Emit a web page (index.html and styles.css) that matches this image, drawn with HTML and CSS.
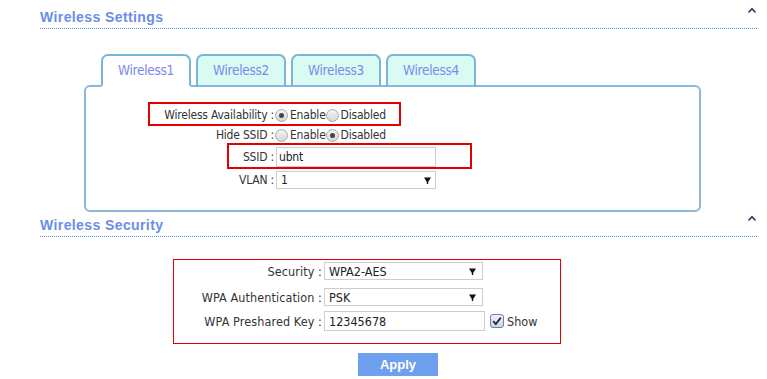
FILE: index.html
```html
<!DOCTYPE html>
<html>
<head>
<meta charset="utf-8">
<link rel="stylesheet" href="styles.css">
</head>
<body>
<div class="sec-head">
  <h2>Wireless Settings</h2>
  <svg class="caret" width="10" height="6" viewBox="0 0 10 6"><path d="M0.5 5.5 L5 0.5 L9.5 5.5 L7.3 5.5 L5 3 L2.7 5.5 Z" fill="#2b3f73"/></svg>
</div>

<div class="tabs-area">
  <div class="tabs">
    <div class="tab active">Wireless1</div>
    <div class="tab">Wireless2</div>
    <div class="tab">Wireless3</div>
    <div class="tab">Wireless4</div>
  </div>
  <div class="panel">
    <div class="prow">
      <span class="plabel">Wireless Availability :</span>
      <span class="ctl"><span class="radio on"></span>Enable<span class="radio"></span>Disabled</span>
    </div>
    <div class="prow">
      <span class="plabel">Hide SSID :</span>
      <span class="ctl"><span class="radio"></span>Enable<span class="radio on"></span>Disabled</span>
    </div>
    <div class="prow r3">
      <span class="plabel">SSID :</span>
      <span class="ctl"><span class="input ssid">ubnt</span></span>
    </div>
    <div class="prow r4">
      <span class="plabel">VLAN :</span>
      <span class="ctl"><span class="select vlan">1<svg class="arrow" width="7" height="7" viewBox="0 0 7 7"><path d="M0 0.5 H7 L4.2 5 V7 H2.8 V5 Z" fill="#111"/></svg></span></span>
    </div>
    <div class="mark m1"></div>
    <div class="mark m2"></div>
  </div>
</div>

<div class="sec-head s2">
  <h2>Wireless Security</h2>
  <svg class="caret" width="10" height="6" viewBox="0 0 10 6"><path d="M0.5 5.5 L5 0.5 L9.5 5.5 L7.3 5.5 L5 3 L2.7 5.5 Z" fill="#2b3f73"/></svg>
</div>

<div class="sec-body">
  <div class="srow">
    <span class="slabel">Security :</span>
    <span class="select sel">WPA2-AES<svg class="arrow" width="7" height="7" viewBox="0 0 7 7"><path d="M0 0.5 H7 L4.2 5 V7 H2.8 V5 Z" fill="#111"/></svg></span>
  </div>
  <div class="srow s-r2">
    <span class="slabel">WPA Authentication :</span>
    <span class="select sel">PSK<svg class="arrow" width="7" height="7" viewBox="0 0 7 7"><path d="M0 0.5 H7 L4.2 5 V7 H2.8 V5 Z" fill="#111"/></svg></span>
  </div>
  <div class="srow s-r3">
    <span class="slabel">WPA Preshared Key :</span>
    <span class="ctl"><span class="input key">12345678</span>
      <svg class="check" width="14" height="14" viewBox="0 0 14 14">
        <defs><linearGradient id="cg" x1="0" y1="0" x2="0" y2="1"><stop offset="0" stop-color="#eef3fa"/><stop offset="1" stop-color="#c9d5e6"/></linearGradient></defs>
        <rect x="0.5" y="0.5" width="13" height="13" rx="2.5" fill="url(#cg)" stroke="#6f7fa3"/>
        <path d="M3.2 7.2 L5.8 10 L10.8 3.6" fill="none" stroke="#2a2a2a" stroke-width="1.8"/>
      </svg><span class="show">Show</span></span>
  </div>
  <div class="mark m3"></div>
</div>

<button class="apply">Apply</button>
</body>
</html>
```
FILE: styles.css
```css
body {
  margin: 0;
  font-family: "DejaVu Sans Condensed", "DejaVu Sans", sans-serif;
  font-size: 12px;
  color: #333;
  background: #fff;
}

.sec-head {
  display: flex;
  justify-content: space-between;
  align-items: flex-start;
  margin: 0 10px 0 40px;
  padding: 9px 0 3px;
  border-bottom: 1px dotted #4b8fe6;
}

.sec-head h2 {
  margin: 0;
  font-family: "Liberation Sans", Arial, sans-serif;
  font-size: 14px;
  line-height: 16px;
  font-weight: bold;
  color: #6b8de9;
  letter-spacing: 0.4px;
}

.caret {
  display: block;
  margin-top: -2px;
}

.s2 {
  padding-top: 5px;
}

.tabs-area {
  margin: 25px 0 0 84px;
  width: 617px;
}

.tabs {
  display: flex;
  gap: 5px;
  padding-left: 17px;
  position: relative;
  z-index: 1;
  margin-bottom: -2px;
}

.tab {
  box-sizing: border-box;
  width: 90px;
  height: 33px;
  border: 2px solid #78b5d8;
  border-bottom-color: #8db7d9;
  border-radius: 7px 7px 0 0;
  background: #d9fbf3;
  text-align: center;
  font-size: 13.5px;
  letter-spacing: -0.3px;
  line-height: 14px;
  padding-top: 7px;
  color: #7b89ef;
}

.tab.active {
  background: #fff;
  border-bottom-color: #fff;
}

.panel {
  position: relative;
  border: 2px solid #8db7d9;
  border-radius: 6px;
  padding: 18px 0 21px;
}

.prow {
  display: flex;
  align-items: center;
  height: 20px;
  line-height: 20px;
  letter-spacing: -0.2px;
}

.prow.r3 { margin-top: 2px; }
.prow.r4 { margin-top: 4px; height: 18px; }

.plabel {
  width: 188px;
  text-align: right;
  white-space: nowrap;
}

.ctl {
  display: flex;
  align-items: center;
  margin-left: 1px;
  color: #333;
}

.radio {
  box-sizing: border-box;
  width: 13px;
  height: 13px;
  border: 1px solid #a9a9a9;
  border-radius: 50%;
  background: linear-gradient(#f4f4f4, #d6d6d6);
  margin-right: 2px;
  display: flex;
  align-items: center;
  justify-content: center;
}

.radio.on::after {
  content: "";
  width: 5px;
  height: 5px;
  border-radius: 50%;
  background: #444;
}

.input, .select {
  box-sizing: border-box;
  border: 1px solid #cdcdcd;
  background: #fff;
  color: #222;
  display: flex;
  align-items: center;
}

.input.ssid {
  width: 160px;
  height: 20px;
  margin-left: 1px;
  padding-left: 2px;
}

.select {
  justify-content: space-between;
  height: 18px;
  padding: 0 4px 0 4px;
}

.select.vlan {
  width: 160px;
  margin-left: 1px;
}

.arrow { display: block; }

.mark {
  position: absolute;
  box-sizing: border-box;
  border: 2px solid #e30000;
  pointer-events: none;
}

.m1 { left: 62px; top: 15px; width: 253px; height: 24px; }
.m2 { left: 141px; top: 56px; width: 245px; height: 26px; }

.sec-body {
  position: relative;
  padding-top: 25px;
  font-size: 12.5px;
}

.srow {
  display: flex;
  align-items: center;
  height: 18px;
}

.s-r2 { margin-top: 8px; }
.s-r3 { margin-top: 5px; height: 20px; }

.slabel {
  width: 322px;
  text-align: right;
  white-space: nowrap;
  margin-right: 2px;
  letter-spacing: 0.1px;
}

.select.sel {
  width: 159px;
  padding: 0 6px 0 4px;
}

.s-r3 .ctl { margin-left: 0; }

.input.key {
  width: 161px;
  height: 20px;
  padding-left: 4px;
}

.check {
  display: block;
  margin-left: 5px;
}

.show {
  margin-left: 3px;
}

.m3 {
  left: 173px;
  top: 22px;
  width: 388px;
  height: 85px;
  border-width: 1px;
}

.apply {
  display: block;
  margin: 22px 0 0 358px;
  width: 80px;
  height: 23px;
  border: none;
  background: #6fa0ef;
  color: #fff;
  font-family: "Liberation Sans", Arial, sans-serif;
  font-weight: bold;
  font-size: 13px;
  padding: 0;
}
```
